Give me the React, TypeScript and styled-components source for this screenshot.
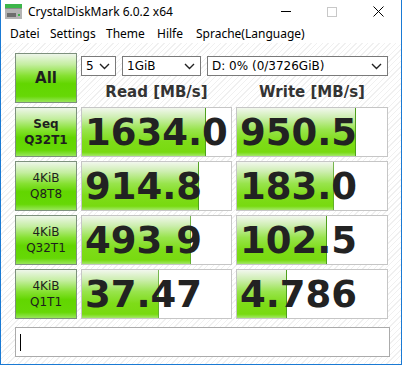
import React from 'react';
import styled, { createGlobalStyle } from 'styled-components';

const GlobalStyle = createGlobalStyle`
  html, body {
    margin: 0;
    padding: 0;
    background: #fff;
  }
  body {
    font-family: "DejaVu Sans", sans-serif;
  }
`;

const Window = styled.div`
  width: 402px;
  height: 365px;
  box-sizing: border-box;
  border: 1px solid #1a7ad4;
  border-top: none;
  display: flex;
  flex-direction: column;
  background: #fff;
`;

const TitleBar = styled.div`
  height: 23px;
  display: flex;
  align-items: center;
  padding-left: 4px;
  font-family: "Noto Sans", sans-serif;
  font-size: 12px;
  color: #000;
`;

const Title = styled.span`
  margin-left: 6px;
`;

const Caption = styled.div`
  margin-left: auto;
  display: flex;
  height: 100%;
`;

const CaptionButton = styled.div`
  width: 46px;
  height: 100%;
  display: flex;
  align-items: center;
  justify-content: center;
`;

const MenuBar = styled.div`
  height: 20px;
  display: flex;
  align-items: center;
  padding-left: 9px;
  font-family: "Noto Sans", sans-serif;
  font-size: 12px;
  color: #000;
`;

const MenuItem = styled.span<{ $w?: number }>`
  width: ${p => (p.$w ? `${p.$w}px` : 'auto')};
  white-space: nowrap;
`;

const Content = styled.div`
  flex: 1;
  padding: 10px 0 0 14px;
  background-color: #fff;
  background-image: repeating-linear-gradient(
    135deg,
    #fff 0px,
    #fff 3px,
    #f0f0f0 3px,
    #f0f0f0 4px
  );
`;

const Grid = styled.div`
  display: grid;
  grid-template-columns: 62px 151px 152px;
  grid-auto-rows: 50px;
  column-gap: 4px;
  row-gap: 4px;
`;

const TestButton = styled.div<{ $big?: boolean; $bold?: boolean }>`
  box-sizing: border-box;
  border: 1px solid #7d917d;
  background: linear-gradient(
    to bottom,
    #eef6ea 0%,
    #c4eea0 22%,
    #86e132 45%,
    #62d600 62%,
    #66d806 88%,
    #98e65a 100%
  );
  display: flex;
  flex-direction: column;
  align-items: center;
  justify-content: center;
  font-size: ${p => (p.$big ? '15px' : '12px')};
  font-weight: ${p => (p.$bold ? 'bold' : 'normal')};
  line-height: 16px;
  color: #1e1e1e;
`;

const HeaderArea = styled.div`
  grid-column: 2 / 4;
  display: flex;
  flex-direction: column;
`;

const SelectRow = styled.div`
  display: flex;
  gap: 6px;
  margin-top: 3px;
`;

const Select = styled.div<{ $w: number }>`
  box-sizing: border-box;
  width: ${p => p.$w}px;
  height: 20px;
  border: 1px solid #7a7a7a;
  background: #fff;
  display: flex;
  align-items: center;
  padding: 0 5px 0 4px;
  font-size: 12px;
  color: #000;
`;

const SelectText = styled.span`
  flex: 1;
  white-space: nowrap;
`;

const Headers = styled.div`
  display: grid;
  grid-template-columns: 151px 152px;
  column-gap: 4px;
  margin-top: 5px;
`;

const Header = styled.div`
  text-align: center;
  font-size: 15px;
  font-weight: bold;
  color: #333;
  line-height: 22px;
`;

const ValueBox = styled.div<{ $fill: number }>`
  box-sizing: border-box;
  border: 1px solid #c6c6c6;
  background-color: #fff;
  background-image:
    linear-gradient(to left, #4e9f1c 1px, transparent 1px),
    linear-gradient(
      to bottom,
      #f2f7ee 0%,
      #cdeeb0 20%,
      #98e44c 45%,
      #7edc18 70%,
      #78da10 92%,
      #a4e86a 100%
    );
  background-repeat: no-repeat;
  background-size: ${p => p.$fill}% 100%;
  display: flex;
  align-items: center;
  padding-left: 3px;
  overflow: hidden;
  font-size: 37px;
  font-weight: bold;
  color: #222;
  line-height: 1;
  white-space: nowrap;
`;

const Comment = styled.div`
  box-sizing: border-box;
  width: 375px;
  height: 30px;
  margin-top: 8px;
  border: 1px solid #ababab;
  background: #fff;
  display: flex;
  align-items: center;
  padding-left: 4px;
`;

const Caret = styled.span`
  width: 1px;
  height: 17px;
  background: #000;
`;

const Chevron = () => (
  <svg width="11" height="7" viewBox="0 0 11 7">
    <path d="M1 1 L5.5 5.5 L10 1" fill="none" stroke="#222" strokeWidth="1.4" />
  </svg>
);

const AppIcon = () => (
  <svg width="17" height="15" viewBox="0 0 17 15">
    <rect x="0" y="0" width="17" height="4" fill="#3cb64a" />
    <rect x="0" y="4" width="17" height="11" fill="#b4b4b4" />
    <rect x="0" y="4" width="17" height="1" fill="#8c8c8c" />
    <rect x="2" y="9" width="9" height="4" fill="#6e6e6e" />
    <rect x="13" y="10" width="2" height="2" fill="#3cb64a" />
  </svg>
);

interface Row {
  label: string[];
  bold?: boolean;
  read: string;
  readFill: number;
  write: string;
  writeFill: number;
}

const rows: Row[] = [
  { label: ['Seq', 'Q32T1'], bold: true, read: '1634.0', readFill: 83.5, write: '950.5', writeFill: 79.5 },
  { label: ['4KiB', 'Q8T8'], read: '914.8', readFill: 78.5, write: '183.0', writeFill: 64.5 },
  { label: ['4KiB', 'Q32T1'], read: '493.9', readFill: 73, write: '102.5', writeFill: 60 },
  { label: ['4KiB', 'Q1T1'], read: '37.47', readFill: 51.5, write: '4.786', writeFill: 33.5 },
];

const menu = [
  { text: 'Datei', w: 40 },
  { text: 'Settings', w: 56 },
  { text: 'Theme', w: 51 },
  { text: 'Hilfe', w: 39 },
  { text: 'Sprache(Language)' },
];

const App = () => {
  return (
    <>
      <GlobalStyle />
      <Window>
        <TitleBar>
          <AppIcon />
          <Title>CrystalDiskMark 6.0.2 x64</Title>
          <Caption>
            <CaptionButton>
              <svg width="10" height="1" viewBox="0 0 10 1">
                <rect width="10" height="1" fill="#000" />
              </svg>
            </CaptionButton>
            <CaptionButton>
              <svg width="10" height="10" viewBox="0 0 10 10">
                <rect x="0.5" y="0.5" width="9" height="9" fill="none" stroke="#c8c8c8" />
              </svg>
            </CaptionButton>
            <CaptionButton>
              <svg width="11" height="11" viewBox="0 0 11 11">
                <path d="M0.5 0.5 L10.5 10.5 M10.5 0.5 L0.5 10.5" stroke="#000" strokeWidth="1" />
              </svg>
            </CaptionButton>
          </Caption>
        </TitleBar>
        <MenuBar>
          {menu.map(m => (
            <MenuItem key={m.text} $w={m.w}>{m.text}</MenuItem>
          ))}
        </MenuBar>
        <Content>
          <Grid>
            <TestButton $big $bold>All</TestButton>
            <HeaderArea>
              <SelectRow>
                <Select $w={35}>
                  <SelectText>5</SelectText>
                  <Chevron />
                </Select>
                <Select $w={79}>
                  <SelectText>1GiB</SelectText>
                  <Chevron />
                </Select>
                <Select $w={181}>
                  <SelectText>D: 0% (0/3726GiB)</SelectText>
                  <Chevron />
                </Select>
              </SelectRow>
              <Headers>
                <Header>Read [MB/s]</Header>
                <Header>Write [MB/s]</Header>
              </Headers>
            </HeaderArea>
            {rows.map(r => (
              <React.Fragment key={r.label.join(' ')}>
                <TestButton $bold={r.bold}>
                  <span>{r.label[0]}</span>
                  <span>{r.label[1]}</span>
                </TestButton>
                <ValueBox $fill={r.readFill}>{r.read}</ValueBox>
                <ValueBox $fill={r.writeFill}>{r.write}</ValueBox>
              </React.Fragment>
            ))}
          </Grid>
          <Comment>
            <Caret />
          </Comment>
        </Content>
      </Window>
    </>
  );
};

export default App;
